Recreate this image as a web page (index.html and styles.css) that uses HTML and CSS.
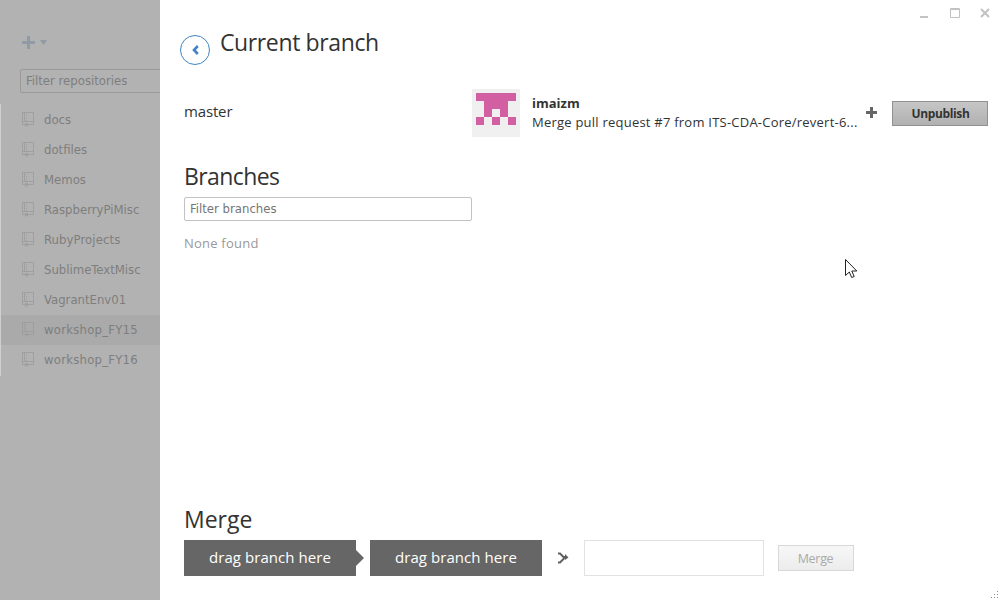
FILE: index.html
```html
<!DOCTYPE html>
<html lang="en">
<head>
<meta charset="utf-8">
<title>Current branch</title>
<link rel="stylesheet" href="styles.css">
</head>
<body>
<svg class="defs" width="0" height="0">
  <symbol id="repo" viewBox="0 0 12 15">
    <path d="M3 12.500H.5V.5h11v12H6M2.500.5v9M.5 9.500h11" fill="none" stroke="currentColor"/>
    <path d="M4.500 2v7" fill="none" stroke="currentColor" stroke-dasharray="1 1"/>
    <path d="M3 11h3v4l-1.500-1.500L3 15z" fill="currentColor"/>
  </symbol>
</svg>
<div class="app">
  <aside class="sidebar">
    <div class="add">
      <svg width="26" height="14" viewBox="0 0 26 14"><path d="M5 0h3v5h5v3H8v5H5V8H0V5h5zM18 4h7l-3.500 5z" fill="currentColor"/></svg>
    </div>
    <div class="repo-filter"><span>Filter repositories</span></div>
    <ul class="repos">
      <li><svg class="book"><use href="#repo"/></svg><span>docs</span></li>
      <li><svg class="book"><use href="#repo"/></svg><span>dotfiles</span></li>
      <li><svg class="book"><use href="#repo"/></svg><span>Memos</span></li>
      <li><svg class="book"><use href="#repo"/></svg><span>RaspberryPiMisc</span></li>
      <li><svg class="book"><use href="#repo"/></svg><span class="wide">RubyProjects</span></li>
      <li><svg class="book"><use href="#repo"/></svg><span>SublimeTextMisc</span></li>
      <li><svg class="book"><use href="#repo"/></svg><span>VagrantEnv01</span></li>
      <li class="selected"><svg class="book"><use href="#repo"/></svg><span class="wider">workshop_FY15</span></li>
      <li><svg class="book"><use href="#repo"/></svg><span class="wider">workshop_FY16</span></li>
    </ul>
  </aside>
  <main class="main">
    <div class="window-buttons">
      <svg width="72" height="12" viewBox="0 0 72 12"><path d="M0 8h8v2H0z" fill="#c4c4c4"/><path d="M30.500.5h9v9h-9zM30 1.500h10" fill="none" stroke="#c2c2c2"/><path d="M61 1l8 8m0-8l-8 8" fill="none" stroke="#c2c2c2" stroke-width="2"/></svg>
    </div>
    <header class="head">
      <span class="back"><svg width="7" height="10" viewBox="0 0 7 10"><path d="M5.800 1L2 5l3.800 4" fill="none" stroke="#4183c4" stroke-width="2.600"/></svg></span>
      <h1>Current branch</h1>
    </header>
    <section class="current">
      <span class="branch-name">master</span>
      <svg class="avatar" width="48" height="48" viewBox="0 0 48 48" shape-rendering="crispEdges"><path d="M0 0h48v48H0z" fill="#f0f0f0"/><path d="M4 4h40v8h-8v16h-8v-8h-8v8h-8V12H4zM4 28h8v8H4zM20 28h8v8h-8zM36 28h8v8h-8z" fill="#d35fa3"/></svg>
      <div class="commit">
        <strong>imaizm</strong>
        <span class="message">Merge pull request #7 from ITS-CDA-Core/revert-6...</span>
      </div>
      <svg class="plus" width="12" height="12" viewBox="0 0 12 12"><path d="M4 0h3v4h4v3H7v4H4V7H0V4h4z" fill="#666"/></svg>
      <button class="unpublish">Unpublish</button>
    </section>
    <section class="branches">
      <h2 class="branches-title">Branches</h2>
      <div class="branch-filter"><span>Filter branches</span></div>
      <p class="none">None found</p>
    </section>
    <section class="merge">
      <h2>Merge</h2>
      <div class="merge-row">
        <div class="drop arrow"><span>drag branch here</span></div>
        <div class="drop second"><span>drag branch here</span></div>
        <svg class="join" width="12" height="14" viewBox="0 0 12 14"><path d="M1 2.500h2L6.500 6h3M1 11.500h2L7.500 7" fill="none" stroke="#606060" stroke-width="2"/><path d="M8 3L11.500 6.500L8 9z" fill="#606060"/></svg>
        <div class="target"></div>
        <button class="merge-btn" disabled>Merge</button>
      </div>
    </section>
    <svg class="grip" width="9" height="9" viewBox="0 0 9 9"><path d="M7 1h1v1H7zM4 4h1v1H4zM7 4h1v1H7zM1 7h1v1H1zM4 7h1v1H4zM7 7h1v1H7z" fill="#888"/></svg>
  </main>
  <svg class="cursor" width="13" height="20" viewBox="0 0 13 20"><path d="M.5.5v16l3.800-3.500 2.400 5.500 2.500-1-2.400-5.500h5z" fill="#fff" stroke="#222"/></svg>
</div>
</body>
</html>
```
FILE: styles.css
```css
* { box-sizing: border-box; }
body { margin: 0; background: #fff; font-family: "Open Sans", "Noto Sans", sans-serif; color: #333; }
h1, h2, p, ul { margin: 0; padding: 0; font-weight: 400; }
.defs { position: absolute; }
.app { display: flex; width: 1000px; height: 600px; overflow: hidden; position: relative; }

.sidebar { width: 160px; background: #b2b2b2; color: #7e7e7e; font-family: "DejaVu Sans Condensed", "DejaVu Sans", sans-serif; font-stretch: condensed; overflow: hidden; }
.add { height: 69px; padding: 36px 0 0 22px; color: #909ba5; }
.add svg { display: block; }
.repo-filter { width: 180px; height: 24px; margin-left: 20px; padding: 0 0 2px 5px; border: 1px solid #9a9a9a; border-radius: 2px; display: flex; align-items: center; font-size: 13px; }
.repos { list-style: none; margin-top: 11px; padding: 1px 0; border-left: 1px solid #ced1d1; width: 160px; }
.repos li { height: 30px; display: flex; align-items: center; padding: 0 0 2px 21px; gap: 10px; font-size: 13px; white-space: nowrap; }
.repos li.selected { background: #aaa; }
.wide { letter-spacing: .08px; }
.wider { letter-spacing: .22px; }
.book { width: 12px; height: 15px; margin-top: 1px; color: #9f9f9f; flex: none; }

.main { width: 840px; height: 600px; display: flex; flex-direction: column; position: relative; }
.window-buttons { height: 34px; padding: 8px 8px 0; display: flex; justify-content: flex-end; }
.head { display: flex; height: 55px; padding-left: 20px; }
.back { width: 30px; height: 30px; margin-top: 1px; border: 1px solid #4183c4; border-radius: 50%; display: flex; align-items: center; justify-content: center; }
h1, h2 { font-size: 23px; line-height: 30px; white-space: nowrap; }
h1 { margin: -7px 0 0 10px; letter-spacing: -.38px; }
.current { display: flex; height: 48px; padding-left: 24px; }
.branch-name { width: 288px; font-size: 15px; line-height: 45px; letter-spacing: -.15px; }
.commit { width: 340px; padding: 5px 0 0 12px; font-size: 13px; line-height: 19px; display: flex; flex-direction: column; white-space: nowrap; }
.message { letter-spacing: .23px; }
.plus { margin: 18px 0 0 6px; flex: none; }
.unpublish { width: 96px; height: 25px; margin: 12px 0 0 14px; padding: 0 0 0 1px; border: 1px solid #919191; background: linear-gradient(#c6c6c6, #b1b1b1); color: #333; font: 700 12px "Open Sans", sans-serif; letter-spacing: -.35px; }
.branches { padding: 24px 0 0 24px; }
.branches-title { letter-spacing: -.6px; }
.branch-filter { width: 288px; height: 24px; margin-top: 6px; padding: 0 0 2px 5px; border: 1px solid #c2c2c2; border-radius: 2px; display: flex; align-items: center; color: #757575; font: 13px "DejaVu Sans Condensed", sans-serif; font-stretch: condensed; }
.none { margin-top: 12px; color: #999; font-size: 13px; line-height: 20px; letter-spacing: .22px; }
.merge { margin-top: auto; padding: 0 0 24px 24px; }
.merge-row { display: flex; align-items: center; margin-top: 6px; }
.drop { width: 172px; height: 36px; padding-bottom: 2px; background: #666; color: #fff; font-size: 15px; letter-spacing: .06px; display: flex; align-items: center; justify-content: center; white-space: nowrap; position: relative; }
.arrow::after { content: ""; position: absolute; left: 172px; top: 10px; border: 8px solid transparent; border-left-color: #666; border-right: 0; }
.second { margin-left: 14px; }
.join { margin-left: 15px; }
.target { width: 180px; height: 36px; margin-left: 15px; border: 1px solid #e2e2e2; }
.merge-btn { width: 76px; height: 26px; margin-left: 14px; padding: 0 1px 0 0; border: 1px solid #d8d8d8; background: linear-gradient(#f7f7f7, #ececec); color: #aaa; font: 12.500px "Open Sans", sans-serif; letter-spacing: -.3px; }
.grip { position: absolute; right: 1px; bottom: 1px; }
.cursor { position: absolute; left: 845px; top: 259px; }
```
